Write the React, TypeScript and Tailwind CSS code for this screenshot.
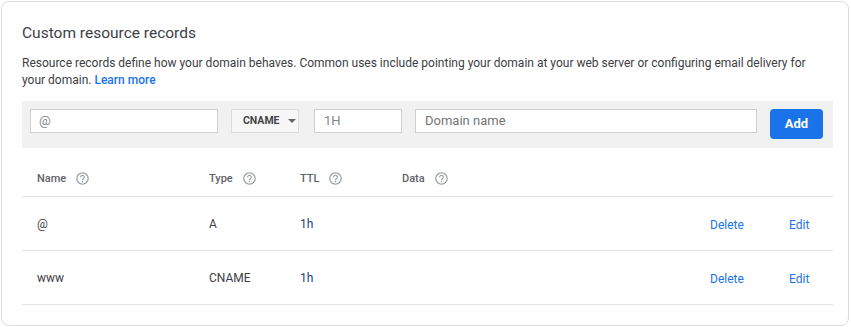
import { MdHelpOutline } from 'react-icons/md';

const records = [
    { name: '@', type: 'A', ttl: '1h' },
    { name: 'www', type: 'CNAME', ttl: '1h' },
];

function Help() {
    return <MdHelpOutline className="ml-[9px] h-[15px] w-[15px] text-[#9aa0a6]" />;
}

export default function App() {
    return (
        <div className="h-[327px] w-[851px] bg-white pt-px pl-px font-['Roboto',sans-serif]">
            <div className="h-[325px] w-[848px] rounded-lg border border-[#dadce0] bg-white pt-[19px] pr-[15px] pl-[20px]">
                {/* Title + intro */}
                <h2 className="text-[15.5px] leading-6 text-[#3c4043]">Custom resource records</h2>
                <p className="mt-[10px] max-w-[790px] text-[12px] leading-[17px] text-[#3c4043]">
                    Resource records define how your domain behaves. Common uses include pointing your domain at your web server or configuring email delivery for your
                    domain. <span className="font-medium text-[#1a73e8]">Learn more</span>
                </p>

                {/* Add record bar */}
                <div className="mt-[12px] flex items-start bg-[#f1f1f1] pt-2 pr-[9px] pb-[9px] pl-2">
                    <div className="flex h-6 w-[188px] items-center border border-[#d0d0d0] bg-white px-[8px] text-[13px] text-[#80868b]">@</div>
                    <div className="ml-[13px] flex h-6 w-[68px] items-center border border-[#dcdcdc] bg-[#f7f7f7] pl-[11px] text-[10.5px] font-bold text-[#444]">
                        CNAME
                        <span className="ml-[8px] h-0 w-0 border-x-[4px] border-t-[4px] border-x-transparent border-t-[#666]" />
                    </div>
                    <div className="ml-[15px] flex h-6 w-[88px] items-center border border-[#d0d0d0] bg-white px-[9px] text-[13px] text-[#80868b]">1H</div>
                    <div className="ml-[13px] flex h-6 w-[342px] items-center border border-[#d0d0d0] bg-white px-[9px] text-[13px] text-[#757575]">Domain name</div>
                    <button className="ml-[13px] h-[30px] w-[53px] rounded bg-[#1a73e8] text-[13px] font-bold text-white">Add</button>
                </div>

                {/* Table */}
                <div className="grid grid-cols-[172px_91px_102px_1fr_79px_44px] border-b border-[#e3e3e3] pt-[22px] pb-[9px] pl-[15px] text-[11px] leading-[17px] font-medium text-[#5f6368]">
                    <div className="flex items-center">Name<Help /></div>
                    <div className="flex items-center">Type<Help /></div>
                    <div className="flex items-center">TTL<Help /></div>
                    <div className="flex items-center">Data<Help /></div>
                    <div />
                    <div />
                </div>
                {records.map((r) => (
                    <div key={r.name} className="grid h-[54px] grid-cols-[172px_91px_102px_1fr_79px_44px] items-center border-b border-[#e3e3e3] pl-[15px] text-[12px] text-[#3c4043]">
                        <div>{r.name}</div>
                        <div>{r.type}</div>
                        <div className="text-[#1f3d7a]">{r.ttl}</div>
                        <div />
                        <div className="mt-[2px] text-[#1a73e8]">Delete</div>
                        <div className="mt-[2px] text-[#1a73e8]">Edit</div>
                    </div>
                ))}
            </div>
        </div>
    );
}
